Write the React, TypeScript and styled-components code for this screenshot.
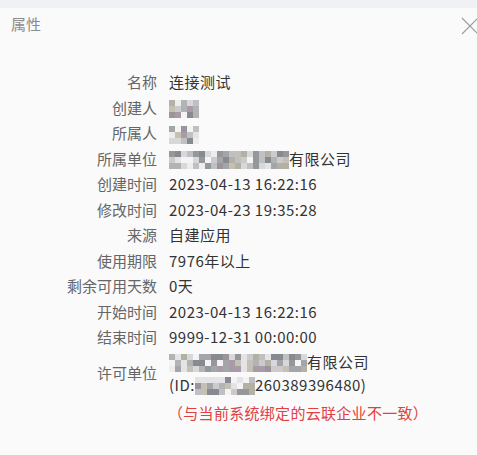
import React from 'react';
import styled, { createGlobalStyle } from 'styled-components';

const GlobalStyle = createGlobalStyle`
  html, body {
    margin: 0;
    padding: 0;
    background: #fafafa;
  }
  body {
    font-family: 'Noto Sans CJK SC', 'Noto Sans', sans-serif;
  }
`;

const Page = styled.div`
  min-height: 100vh;
  box-sizing: border-box;
  border-top: 8px solid #eff1f5;
  background: #fafafa;
  overflow: hidden;
`;

const Header = styled.div`
  height: 30px;
  display: flex;
  align-items: center;
  justify-content: space-between;
  padding: 0 0 0 11px;
`;

const Title = styled.div`
  font-size: 15px;
  color: #8c8c8c;
`;

const CloseButton = styled.button`
  border: none;
  background: transparent;
  padding: 0;
  margin: 5px -2px 0 0;
  display: flex;
  cursor: pointer;
`;

const Props = styled.div`
  display: grid;
  grid-template-columns: 157px 1fr;
  column-gap: 12px;
  margin-top: 31px;
  font-size: 15px;
  line-height: 25.5px;
`;

const Label = styled.div`
  text-align: right;
  color: #666;
  white-space: nowrap;
  display: flex;
  align-items: center;
  justify-content: flex-end;
`;

const Value = styled.div<{ $multi?: boolean }>`
  color: #333;
  white-space: nowrap;
  letter-spacing: 0.5px;
  line-height: ${p => (p.$multi ? '23px' : '25.5px')};
`;

const Warning = styled.div`
  grid-column: 2;
  color: #e2403f;
  margin-top: 4px;
  margin-left: -1px;
  letter-spacing: 0.3px;
`;

const MosaicGrid = styled.span<{ $cell: number; $cols: number }>`
  display: inline-grid;
  grid-template-columns: repeat(${p => p.$cols}, ${p => p.$cell}px);
  grid-auto-rows: ${p => p.$cell}px;
  vertical-align: middle;
`;

const Cell = styled.span`
  display: block;
`;

const palette = ['#e4e4e6', '#d8d8da', '#cbcbcd', '#bfc0c2', '#b1b3b5', '#a3a5a8', '#94989b', '#878b8f', '#9b959b', '#b5b0a4', '#c4c1b4', '#a89aa6', '#ededee', '#f4f4f4'];

function Mosaic({ cols, rows, seed, cell = 6 }: { cols: number; rows: number; seed: number; cell?: number }) {
  let s = seed;
  const rnd = () => {
    s = (s * 9301 + 49297) % 233280;
    return s / 233280;
  };
  const cells: string[] = [];
  for (let i = 0; i < cols * rows; i++) {
    cells.push(palette[Math.floor(rnd() * palette.length)]);
  }
  return (
    <MosaicGrid $cell={cell} $cols={cols}>
      {cells.map((c, i) => (
        <Cell key={i} style={{ background: c }} />
      ))}
    </MosaicGrid>
  );
}

const CloseIcon = () => (
  <svg width="18" height="18" viewBox="0 0 18 18" fill="none">
    <path d="M1 1L17 17M17 1L1 17" stroke="#9a9a9a" strokeWidth="1.1" />
  </svg>
);

const rows: [string, React.ReactNode][] = [
  ['名称', '连接测试'],
  ['创建人', <Mosaic cols={5} rows={3} seed={11} cell={6} />],
  ['所属人', <Mosaic cols={5} rows={3} seed={29} cell={6} />],
  ['所属单位', <><Mosaic cols={20} rows={3} seed={7} cell={6} />有限公司</>],
  ['创建时间', '2023-04-13 16:22:16'],
  ['修改时间', '2023-04-23 19:35:28'],
  ['来源', '自建应用'],
  ['使用期限', '7976年以上'],
  ['剩余可用天数', '0天'],
  ['开始时间', '2023-04-13 16:22:16'],
  ['结束时间', '9999-12-31 00:00:00'],
];

const App: React.FC = () => {
  return (
    <>
      <GlobalStyle />
      <Page>
        <Header>
          <Title>属性</Title>
          <CloseButton aria-label="关闭">
            <CloseIcon />
          </CloseButton>
        </Header>
        <Props>
          {rows.map(([label, value]) => (
            <React.Fragment key={label}>
              <Label>{label}</Label>
              <Value>{value}</Value>
            </React.Fragment>
          ))}
          <Label>许可单位</Label>
          <Value $multi>
            <div><Mosaic cols={23} rows={3} seed={53} cell={6} />有限公司</div>
            <div>(ID:<Mosaic cols={10} rows={3} seed={71} cell={6} />260389396480)</div>
          </Value>
          <Warning>（与当前系统绑定的云联企业不一致）</Warning>
        </Props>
      </Page>
    </>
  );
};

export default App;
